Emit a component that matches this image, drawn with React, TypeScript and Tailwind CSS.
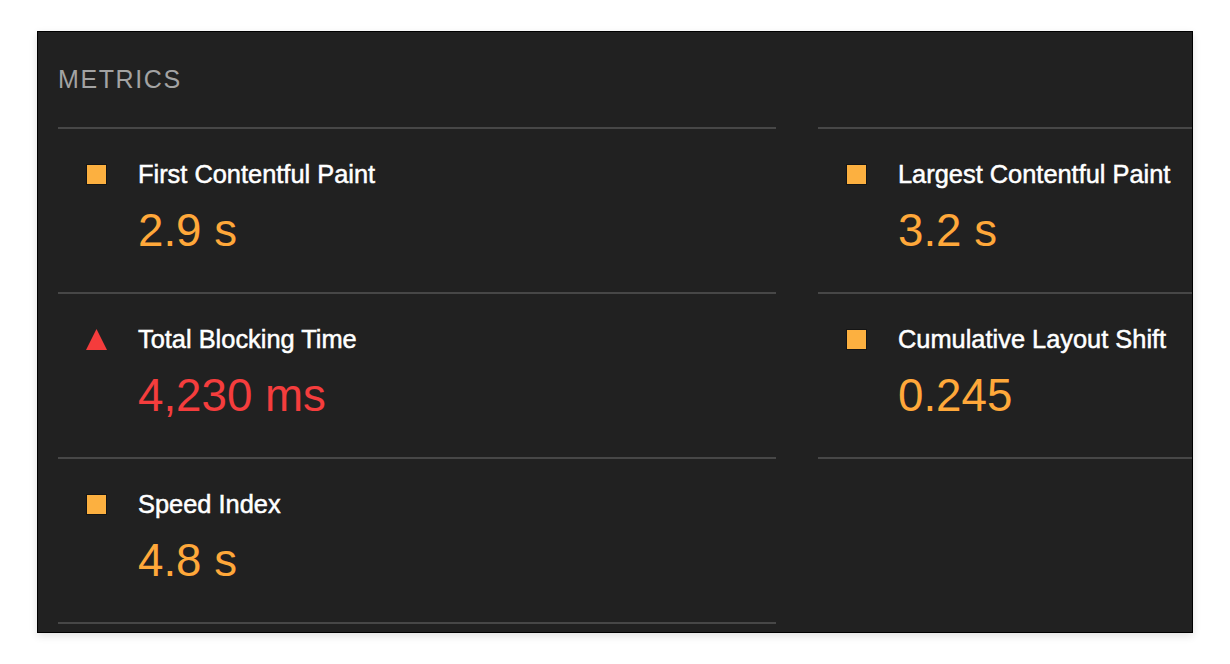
import React from "react";

type Metric = {
  title: string;
  value: string;
  kind: "average" | "fail";
};

const metrics: Metric[] = [
  { title: "First Contentful Paint", value: "2.9 s", kind: "average" },
  { title: "Largest Contentful Paint", value: "3.2 s", kind: "average" },
  { title: "Total Blocking Time", value: "4,230 ms", kind: "fail" },
  { title: "Cumulative Layout Shift", value: "0.245", kind: "average" },
  { title: "Speed Index", value: "4.8 s", kind: "average" },
];

function Icon({ kind }: { kind: Metric["kind"] }) {
  if (kind === "fail") {
    return (
      <div className="w-[19px] flex justify-center shrink-0">
        <svg width="21" height="21" viewBox="0 0 21 21" className="shrink-0">
          <polygon points="10.5,0 21,21 0,21" fill="#f53c3c" />
        </svg>
      </div>
    );
  }
  return (
    <div className="w-[19px] flex justify-center shrink-0">
      <div className="w-[19px] h-[19px] bg-[#fcb040] shadow-[0_0_0_1px_rgba(0,0,0,0.35)]" />
    </div>
  );
}

function MetricItem({ m, first }: { m: Metric; first: boolean }) {
  return (
    <div
      className={`border-b-2 border-[#474747] pt-[31px] pb-[38px] pl-[29px] ${
        first ? "border-t-2" : ""
      }`}
    >
      <div className="flex items-center gap-[32px]">
        <Icon kind={m.kind} />
        <div
          className="text-white text-[25.4px] leading-[28px] whitespace-nowrap [-webkit-text-stroke:0.5px_#ffffff]"
          style={{ fontFamily: "'Liberation Sans', Arial, sans-serif" }}
        >
          {m.title}
        </div>
      </div>
      <div
        className={`mt-[20px] pl-[51px] text-[45.7px] leading-[46px] whitespace-nowrap ${
          m.kind === "fail" ? "text-[#f53d3d]" : "text-[#ffa83a]"
        }`}
        style={{ fontFamily: "'Liberation Sans', Arial, sans-serif" }}
      >
        {m.value}
      </div>
    </div>
  );
}

export default function App() {
  return (
    <div className="min-h-screen w-full bg-white pt-[31px] pl-[37px]">
      <div className="w-[1156px] h-[602px] border border-black bg-[#212121] overflow-hidden shadow-[0_3px_8px_rgba(0,0,0,0.12)] pl-[20px]">
        <div
          className="h-[95px] pt-[35px] text-[25px] leading-[25px] tracking-[1.6px] text-[#a3a3a3]"
          style={{ fontFamily: "'Liberation Sans', Arial, sans-serif" }}
        >
          METRICS
        </div>
        <div className="grid grid-cols-[718px_718px] gap-x-[42px] w-[1478px]">
          {metrics.map((m, i) => (
            <MetricItem key={m.title} m={m} first={i < 2} />
          ))}
        </div>
      </div>
    </div>
  );
}
